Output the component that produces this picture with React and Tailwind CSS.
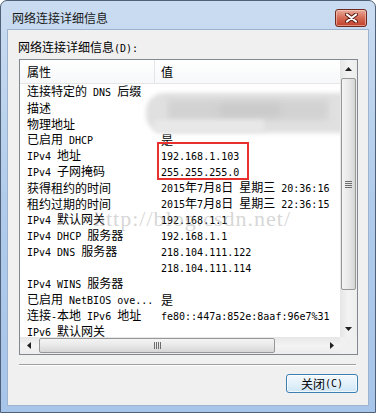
import React from "react";

function T({ s }) {
  const parts = s.split(/([\u0000-\u00ff]+)/).filter((p) => p.length > 0);
  return parts.map((p, i) =>
    /[\u0000-\u00ff]/.test(p[0]) ? (
      <span key={i} className="font-['DejaVu_Sans_Mono',monospace] text-[10px]">
        {p}
      </span>
    ) : (
      <span key={i}>{p}</span>
    )
  );
}

const rows = [
  ["连接特定的 DNS 后缀", ""],
  ["描述", ""],
  ["物理地址", ""],
  ["已启用 DHCP", "是"],
  ["IPv4 地址", "192.168.1.103"],
  ["IPv4 子网掩码", "255.255.255.0"],
  ["获得租约的时间", "2015年7月8日 星期三 20:36:16"],
  ["租约过期的时间", "2015年7月8日 星期三 22:36:15"],
  ["IPv4 默认网关", "192.168.1.1"],
  ["IPv4 DHCP 服务器", "192.168.1.1"],
  ["IPv4 DNS 服务器", "218.104.111.122"],
  ["", "218.104.111.114"],
  ["IPv4 WINS 服务器", ""],
  ["已启用 NetBIOS ove...", "是"],
  ["连接-本地 IPv6 地址", "fe80::447a:852e:8aaf:96e7%31"],
  ["IPv6 默认网关", ""],
];

function Tri({ dir }) {
  const pts = {
    up: "0,4 3.5,0 7,4",
    down: "0,0 3.5,4 7,0",
    left: "4,0 0,3.5 4,7",
    right: "0,0 4,3.5 0,7",
  }[dir];
  const w = dir === "up" || dir === "down" ? 7 : 4;
  const h = dir === "up" || dir === "down" ? 4 : 7;
  return (
    <svg width={w} height={h} viewBox={`0 0 ${w} ${h}`}>
      <polygon points={pts} fill="#202020" />
    </svg>
  );
}

export default function App() {
  return (
    <div className="w-[376px] h-[413px] flex flex-col rounded-t-[7px] border border-[#4f6178] bg-gradient-to-b from-[#cadcf1] via-[#b0cbeb] to-[#a7c5ea] font-['Noto_Sans_CJK_SC',sans-serif] text-[12px] text-black overflow-hidden">
      {/* title bar */}
      <div className="h-[28px] flex items-start shrink-0">
        <div className="pl-[11px] pt-[9px] leading-[16px] text-[12px] text-[#1a1a1a]">网络连接详细信息</div>
        <div className="ml-auto mr-[8px] mt-[8px] w-[32px] h-[18px] rounded-[3px] border border-[#6e2a20] bg-gradient-to-b from-[#e8ab9b] via-[#d46a55] to-[#c23f2a] flex items-center justify-center shadow-[inset_0_0_0_1px_rgba(255,220,210,0.5)]">
          <svg width="13" height="10" viewBox="0 0 13 10">
            <path d="M2 1.5 L11 8.5 M11 1.5 L2 8.5" stroke="#5a1a12" strokeWidth="4" strokeLinecap="round" />
            <path d="M2 1.5 L11 8.5 M11 1.5 L2 8.5" stroke="#ffffff" strokeWidth="2.2" strokeLinecap="round" />
          </svg>
        </div>
      </div>

      {/* client area */}
      <div className="flex-1 mx-[6px] mb-[6px] border border-[#9db3cf] bg-[#f0f0f0] flex flex-col">
        <div className="pl-[10px] pt-[9px] leading-[16px]">
          网络连接详细信息<T s="(D):" />
        </div>

        {/* listbox */}
        <div className="relative ml-[11px] mt-[2px] w-[339px] h-[296px] border border-[#828790] bg-white flex flex-col">
          <div className="flex h-[277px]">
            <div className="relative w-[320px] overflow-hidden">
              {/* header */}
              <div className="flex h-[24px] border-b border-[#e5e5e5] bg-gradient-to-b from-white to-[#f7f8fa]">
                <div className="w-[134px] pl-[7px] flex items-center">属性</div>
                <div className="w-px bg-[#e3e5e8]" />
                <div className="pl-[6px] flex items-center">值</div>
              </div>
              {rows.map(([a, b], i) => (
                <div key={i} className="flex h-[16px] items-center leading-[16px] whitespace-pre">
                  <div className="w-[135px] pl-[7px] overflow-hidden">
                    <T s={a} />
                  </div>
                  <div className="pl-[6px]">
                    <T s={b} />
                  </div>
                </div>
              ))}

              {/* blurred area */}
              <div className="absolute left-[126px] top-[33px] w-[210px] h-[40px] rounded-l-[18px] bg-[#e0e0e0] blur-[2px]" />
              <div className="absolute left-[148px] top-[40px] w-[160px] h-[20px] bg-[#d2d2d2] blur-[3px]" />
              <div className="absolute left-[200px] top-[44px] w-[60px] h-[12px] bg-[#cacaca] blur-[3px]" />
              <div className="absolute left-[134px] top-[60px] w-[110px] h-[12px] bg-[#e8e8e8] blur-[2px]" />

              {/* watermark */}
              <div className="absolute left-[74px] top-[146px] leading-[26px] text-[22px] tracking-[1px] font-['Liberation_Serif',serif] text-[rgba(150,150,150,0.4)] whitespace-nowrap">
                http://blog.csdn.net/
              </div>

              {/* red highlight */}
              <div className="absolute left-[137px] top-[82px] w-[92px] h-[38px] border-2 border-[#e8312f]" />
            </div>

            {/* vertical scrollbar */}
            <div className="w-[17px] flex flex-col bg-gradient-to-r from-[#e6e6e6] via-[#f3f3f3] to-[#ececec]">
              <div className="h-[17px] flex items-center justify-center">
                <Tri dir="up" />
              </div>
              <div className="mt-[1px] mx-[1px] h-[212px] rounded-[2px] border border-[#979797] bg-gradient-to-r from-[#f4f4f4] via-[#e8e8e8] to-[#d6d6d6] flex flex-col items-center justify-center gap-[1px]">
                <div className="w-[7px] h-px bg-[#6d6d6d]" />
                <div className="w-[7px] h-px bg-[#6d6d6d]" />
                <div className="w-[7px] h-px bg-[#6d6d6d]" />
                <div className="w-[7px] h-px bg-[#6d6d6d]" />
              </div>
              <div className="flex-1" />
              <div className="h-[17px] flex items-center justify-center">
                <Tri dir="down" />
              </div>
            </div>
          </div>

          {/* horizontal scrollbar */}
          <div className="flex h-[17px]">
            <div className="w-[320px] flex items-stretch bg-gradient-to-b from-[#e6e6e6] via-[#f3f3f3] to-[#ececec]">
              <div className="w-[17px] flex items-center justify-center">
                <Tri dir="left" />
              </div>
              <div className="ml-[2px] my-[1px] w-[236px] rounded-[2px] border border-[#979797] bg-gradient-to-b from-[#f4f4f4] via-[#e8e8e8] to-[#d6d6d6] flex items-center justify-center gap-[1px]">
                <div className="h-[7px] w-px bg-[#6d6d6d]" />
                <div className="h-[7px] w-px bg-[#6d6d6d]" />
                <div className="h-[7px] w-px bg-[#6d6d6d]" />
                <div className="h-[7px] w-px bg-[#6d6d6d]" />
              </div>
              <div className="flex-1" />
              <div className="w-[17px] flex items-center justify-center">
                <Tri dir="right" />
              </div>
            </div>
            <div className="w-[17px] bg-[#f0f0f0]" />
          </div>
        </div>

        {/* separator */}
        <div className="ml-[11px] mt-[9px] w-[337px] h-px bg-[#a0a0a0]" />
        <div className="ml-[11px] w-[337px] h-px bg-white" />

        {/* button */}
        <div className="flex mt-[8px]">
          <div className="ml-auto mr-[10px] w-[72px] h-[19px] rounded-[3px] border border-[#3c7fb1] bg-gradient-to-b from-[#f2f9fd] via-[#e4f1fa] to-[#cfe6f6] shadow-[inset_0_0_0_1px_rgba(255,255,255,0.7)] flex items-center justify-center leading-[16px]">
            关闭<T s="(C)" />
          </div>
        </div>
      </div>
    </div>
  );
}
